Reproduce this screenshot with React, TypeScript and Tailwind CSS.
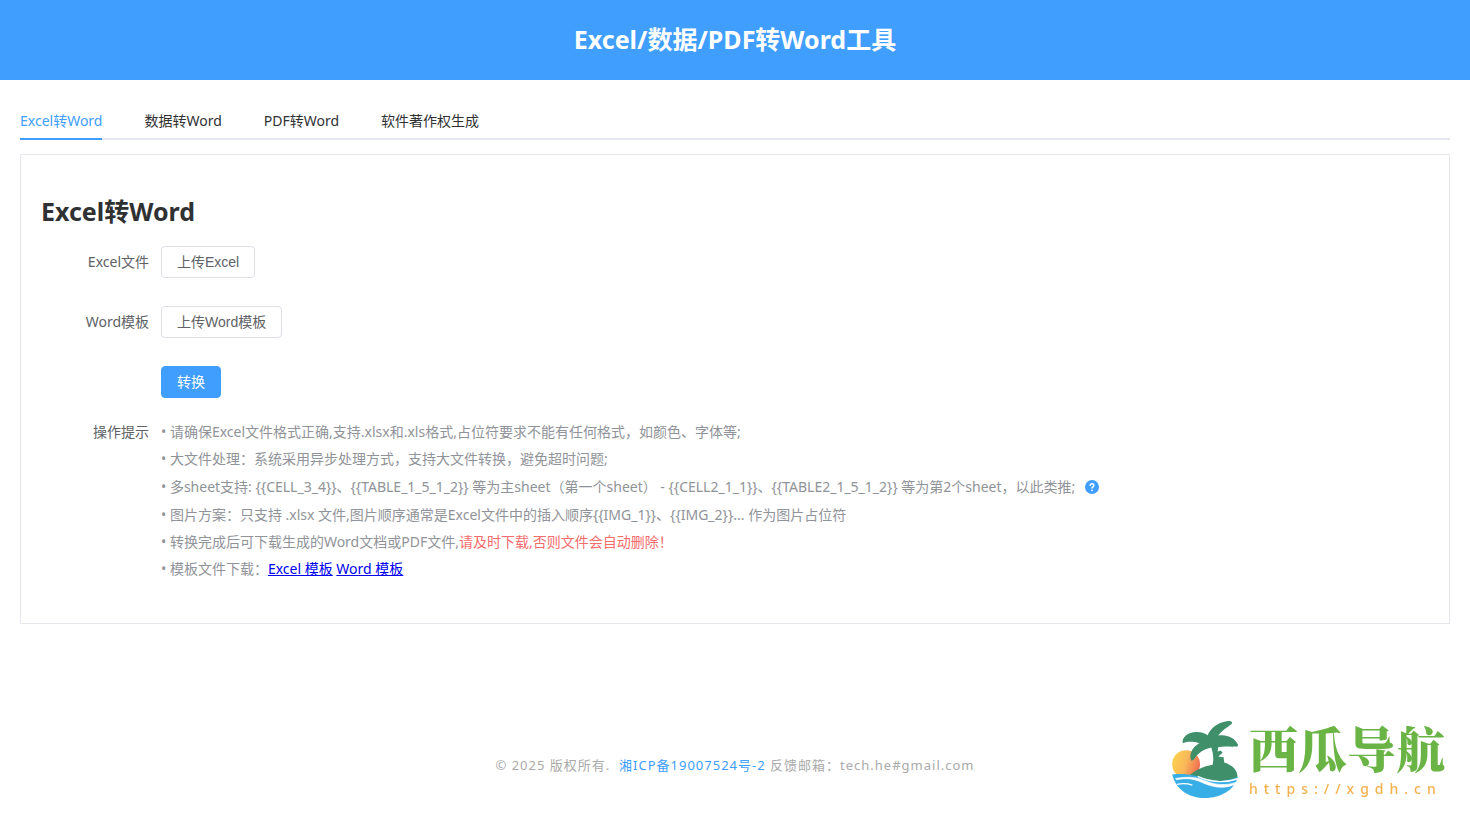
import React, { useState } from 'react';

const TABS = ['Excel转Word', '数据转Word', 'PDF转Word', '软件著作权生成'];

interface FormRowProps {
  label: string;
  htmlFor?: string;
  children: React.ReactNode;
}

const FormRow: React.FC<FormRowProps> = ({ label, htmlFor, children }) => (
  <div className="flex mb-7">
    <label htmlFor={htmlFor} className="w-[120px] shrink-0 pr-3 text-right leading-8 text-[#606266]">
      {label}
    </label>
    {children}
  </div>
);

const buttonClass =
  'h-8 px-[15px] rounded-[4px] border text-sm font-["Liberation_Sans","Noto_Sans_CJK_SC",sans-serif]';

const HelpIcon = () => (
  <svg viewBox="0 0 14 14" className="w-[14px] h-[14px]" aria-hidden="true">
    <circle cx="7" cy="7" r="7" fill="#409eff" />
    <path d="M5.2 5.6c0-1.1.7-1.8 1.8-1.8s1.8.7 1.8 1.7c0 1.3-1.8 1.3-1.8 2.6" fill="none" stroke="#fff" strokeWidth="1.5" strokeLinecap="round" />
    <circle cx="7" cy="10.3" r=".9" fill="#fff" />
  </svg>
);

const IslandLogo = () => (
  <svg viewBox="18 14 204 238" className="w-[68px] h-[79px] shrink-0" aria-hidden="true">
    <defs>
      <linearGradient id="sun" x1="0" y1="0.3" x2="1" y2="0.6">
        <stop offset="0" stopColor="#fbd24c" />
        <stop offset="0.5" stopColor="#f9b75a" />
        <stop offset="1" stopColor="#ee6a50" />
      </linearGradient>
    </defs>
    <circle cx="63" cy="147" r="42" fill="url(#sun)" />
    <path
      d="M72 182C90 166 115 153 143 149C147 133 145 115 139 97C118 101 100 114 91 127C87 133 83 137 79 137C71 121 79 97 103 84C84 78 68 79 53 84C49 66 70 49 96 50C110 50 121 54 128 60C136 40 158 20 190 17C200 16 204 22 200 26C188 36 171 45 160 61C184 56 210 67 219 88C221 93 217 95 212 94C194 95 176 92 160 96L158 109L167 106L173 113L160 124L176 126L178 142C202 150 218 164 218 186L206 202C160 200 116 190 72 182Z"
      fill="#3f906a"
    />
    <path d="M21 178C62 173 94 181 123 192C157 203 189 197 219 185C210 224 168 249 120 249C73 249 33 225 21 178Z" fill="#38aee6" />
    <path
      d="M34 194C65 188 85 190 113 203C147 218 176 222 210 208L213 202C180 213 151 210 118 196C87 183 62 186 31 190Z"
      fill="#fff"
      stroke="#fff"
      strokeWidth="2"
    />
    <path d="M98 184C136 202 177 205 219 191" fill="none" stroke="#fff" strokeWidth="4" />
    <path d="M36 208C54 204 69 206 82 210" fill="none" stroke="#fff" strokeWidth="4" />
  </svg>
);

export default function App() {
  const [activeTab, setActiveTab] = useState(TABS[0]);

  return (
    <div className='min-h-screen flex flex-col bg-white text-sm text-[#303133] font-["Noto_Sans","Noto_Sans_CJK_SC",sans-serif]'>
      <header className="h-20 flex items-center justify-center bg-[#409eff] text-white">
        <h1 className="text-[25px] font-bold">Excel/数据/PDF转Word工具</h1>
      </header>

      <main className="p-5">
        <nav className="flex gap-[42px] border-b-2 border-[#e4e7ed] mb-[14px]">
          {TABS.map((tab) => (
            <button
              key={tab}
              type="button"
              onClick={() => setActiveTab(tab)}
              className={
                tab === activeTab
                  ? 'h-10 pt-1 -mb-[2px] border-b-2 border-[#409eff] text-[#409eff]'
                  : 'h-10 pt-1 -mb-[2px] border-b-2 border-transparent'
              }
            >
              {tab}
            </button>
          ))}
        </nav>

        <section className="border border-[#e4e7ed] px-5 py-10 min-h-[470px]">
          <h2 className="text-[25px] leading-8 font-bold mb-[19px]">Excel转Word</h2>
          <FormRow label="Excel文件" htmlFor="excel-file">
            <button id="excel-file" type="button" className={`${buttonClass} border-[#dcdfe6] text-[#606266]`}>
              上传Excel
            </button>
          </FormRow>
          <FormRow label="Word模板" htmlFor="word-file">
            <button id="word-file" type="button" className={`${buttonClass} border-[#dcdfe6] text-[#606266]`}>
              上传Word模板
            </button>
          </FormRow>
          <div className="pl-[120px] mb-[18px]">
            <button type="button" className={`${buttonClass} border-[#409eff] bg-[#409eff] text-white`}>
              转换
            </button>
          </div>
          <div className="flex">
            <span className="w-[120px] shrink-0 pr-3 text-right leading-8 text-[#606266]">操作提示</span>
            <div className="pt-[2px] leading-[27px] text-[#909399]">
              <p>• 请确保Excel文件格式正确,支持.xlsx和.xls格式,占位符要求不能有任何格式，如颜色、字体等;</p>
              <p>• 大文件处理：系统采用异步处理方式，支持大文件转换，避免超时问题;</p>
              <p className="flex items-center gap-[10px] leading-[29px]">
                {'• 多sheet支持: {{CELL_3_4}}、{{TABLE_1_5_1_2}} 等为主sheet（第一个sheet） - {{CELL2_1_1}}、{{TABLE2_1_5_1_2}} 等为第2个sheet，以此类推;'}
                <HelpIcon />
              </p>
              <p>{'• 图片方案：只支持 .xlsx 文件,图片顺序通常是Excel文件中的插入顺序{{IMG_1}}、{{IMG_2}}... 作为图片占位符'}</p>
              <p>
                • 转换完成后可下载生成的Word文档或PDF文件,
                <span className="text-[#f56c6c]">请及时下载,否则文件会自动删除！</span>
              </p>
              <p>
                • 模板文件下载：
                <a href="#excel" className="text-[#0000ee] underline">Excel 模板</a>{' '}
                <a href="#word" className="text-[#0000ee] underline">Word 模板</a>
              </p>
            </div>
          </div>
        </section>
      </main>

      <footer className="mt-auto pb-[41px] text-center text-[13px] leading-5 tracking-[1px] text-[#aaaaaa]">
        © 2025 版权所有.&nbsp;{' '}
        <a href="#icp" className="text-[#409eff]">湘ICP备19007524号-2</a> 反馈邮箱：tech.he#gmail.com
      </footer>

      <a href="#xgdh" className="fixed right-[25px] bottom-[17px] flex items-center gap-[10px]">
        <IslandLogo />
        <span className="flex flex-col gap-1">
          <span className='text-[49px] leading-[56px] font-black text-[#6ab445] font-["Noto_Serif_CJK_SC","Noto_Sans_CJK_SC",serif]'>
            西瓜导航
          </span>
          <span className="text-[14px] leading-5 tracking-[6px] font-medium text-[#f6b04c]">https://xgdh.cn</span>
        </span>
      </a>
    </div>
  );
}
